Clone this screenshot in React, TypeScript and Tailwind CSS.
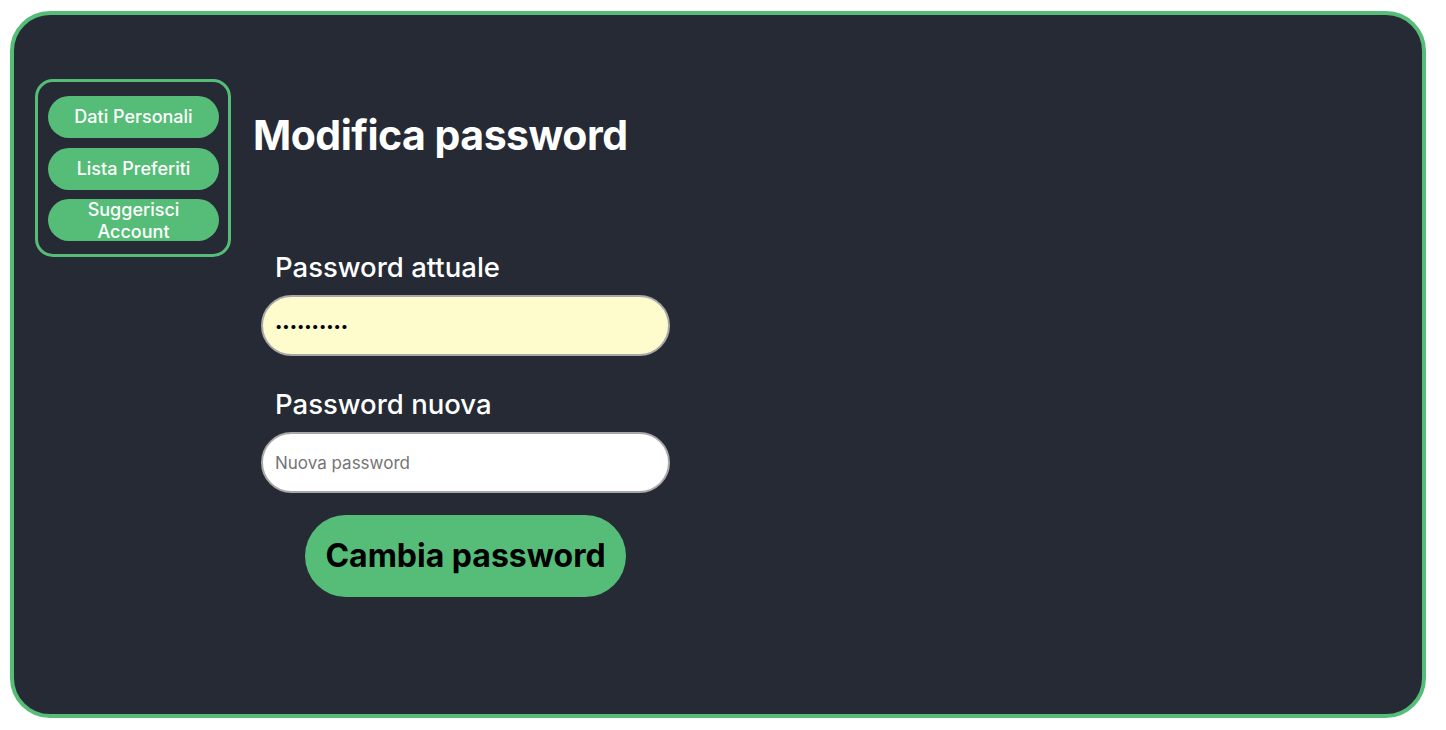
import React from "react";

const font = { fontFamily: "Inter, 'Noto Sans', sans-serif" };

// Sidebar link button
const SideButton: React.FC<{ children: React.ReactNode }> = ({ children }) => (
  <button className="w-[171px] h-[42px] rounded-full bg-[#55bd78] text-white font-medium text-[18px] leading-[22px] text-center">
    {children}
  </button>
);

export default function App() {
  return (
    <div
      className="w-[1446px] h-[730px] bg-white pt-[11px] pl-[10px]"
      style={font}
    >
      <div className="w-[1416px] h-[707px] rounded-[40px] border-4 border-[#55bd78] bg-[#252a34] flex items-start pl-[21px] pt-[64px]">
        {/* Sidebar */}
        <div className="w-[196px] border-[3px] border-[#55bd78] rounded-[18px] pt-[14px] pb-[13px] pl-[10px] flex flex-col gap-[9.5px]">
          <SideButton>Dati Personali</SideButton>
          <SideButton>Lista Preferiti</SideButton>
          <SideButton>
            Suggerisci
            <br />
            Account
          </SideButton>
        </div>

        {/* Main */}
        <div className="ml-[22px] flex flex-col">
          <h1 className="mt-[30px] text-white font-bold text-[41px] leading-[52px] tracking-[-0.5px]">
            Modifica password
          </h1>

          <div className="ml-[8px] flex flex-col w-[409px]">
            <label className="mt-[90px] pl-[14px] text-white font-medium text-[27.5px] leading-[32px]">
              Password attuale
            </label>
            <input
              type="password"
              defaultValue="abcdefghij"
              className="mt-[12px] h-[61px] w-[409px] rounded-full border-2 border-[#a8a8a8] bg-[#fefbcd] pl-[12px] text-[13px] text-black outline-none"
            />

            <label className="mt-[32px] pl-[14px] text-white font-medium text-[27.5px] leading-[32px]">
              Password nuova
            </label>
            <input
              type="password"
              placeholder="Nuova password"
              className="mt-[12px] h-[61px] w-[409px] rounded-full border-2 border-[#a8a8a8] bg-white pl-[12px] text-[17px] text-black placeholder:text-[#757575] outline-none"
            />

            <button className="mt-[22px] self-center w-[321px] h-[82px] rounded-full bg-[#55bd78] text-black font-bold text-[32px]">
              Cambia password
            </button>
          </div>
        </div>
      </div>
    </div>
  );
}
